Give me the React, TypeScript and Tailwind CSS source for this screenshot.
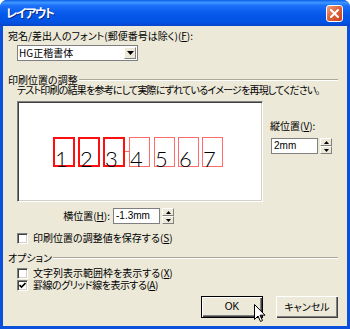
import React from 'react';

const jp = "font-['Noto_Sans_CJK_JP',sans-serif] [font-feature-settings:'palt']";

const Key: React.FC<{ k: string }> = ({ k }) => <span className="underline underline-offset-1">{k}</span>;

const Check: React.FC<{ checked?: boolean }> = ({ checked }) => (
  <span className="flex h-[11px] w-[11px] shrink-0 items-center justify-center border border-t-[#808080] border-l-[#808080] border-b-white border-r-white bg-white shadow-[inset_1px_1px_0_#404040,inset_-1px_-1px_0_#d4d0c8]">
    {checked && (
      <svg width="7" height="7" viewBox="0 0 7 7">
        <path d="M0.5 3 L2.5 5 L6.5 1" fill="none" stroke="#000" strokeWidth="1.6" />
      </svg>
    )}
  </span>
);

const Arrow: React.FC<{ up?: boolean }> = ({ up }) => (
  <svg width="5" height="3" viewBox="0 0 5 3">
    <path d={up ? 'M2.5 0 L5 3 L0 3 Z' : 'M0 0 L5 0 L2.5 3 Z'} fill="#000" />
  </svg>
);

const Spin: React.FC = () => (
  <div className="ml-[2px] flex h-[16px] w-[12px] flex-col">
    <div className="flex h-[8px] items-center justify-center border border-t-white border-l-white border-b-[#808080] border-r-[#808080] bg-[#ece9d8]">
      <Arrow up />
    </div>
    <div className="flex h-[8px] items-center justify-center border border-t-white border-l-white border-b-[#808080] border-r-[#808080] bg-[#ece9d8]">
      <Arrow />
    </div>
  </div>
);

const SpinField: React.FC<{ value: string }> = ({ value }) => (
  <div className="flex items-center">
    <div className="flex h-[16px] w-[47px] items-center border border-[#7f7f7f] bg-white pl-[2px] text-[10px] leading-none font-['Liberation_Sans',sans-serif]">
      {value}
    </div>
    <Spin />
  </div>
);

const GroupHeader: React.FC<{ label: string }> = ({ label }) => (
  <div className="mr-[9px] flex h-[11px] items-center leading-[11px]">
    <span>{label}</span>
    <div className="ml-[1px] h-[2px] flex-1 border-t border-t-[#aca899] border-b border-b-white" />
  </div>
);

type Mark = { n: string; strong?: boolean; ml: number };

const marks: Mark[] = [
  { n: '1', strong: true, ml: 0 },
  { n: '2', strong: true, ml: 3 },
  { n: '3', strong: true, ml: 3 },
  { n: '4', ml: 0 },
  { n: '5', ml: 4 },
  { n: '6', ml: 3 },
  { n: '7', ml: 3 },
];

const Preview: React.FC = () => (
  <div className="h-[101px] w-[246px] border border-t-[#808080] border-l-[#808080] border-b-white border-r-white bg-white shadow-[inset_1px_1px_0_#404040,inset_-1px_-1px_0_#d4d0c8]">
    <div className="flex pl-[35px] pt-[35px]">
      {marks.map((m, i) => (
        <React.Fragment key={m.n}>
          {i === 3 && <div className="mt-[14px] h-px w-[4px] bg-[#ff6a6a]" />}
          <div
            className={
              m.strong
                ? 'relative h-[30px] w-[22px] border-2 border-[#ff1010]'
                : 'relative h-[30px] w-[21px] border border-[#ff6a6a]'
            }
            style={{ marginLeft: m.ml }}
          >
            <span
              className={
                m.strong
                  ? "absolute left-[0px] top-[9px] text-[22px] font-light leading-none text-black font-['Lato',sans-serif]"
                  : "absolute left-[0px] top-[10px] text-[22px] font-light leading-none text-black font-['Lato',sans-serif]"
              }
            >
              {m.n}
            </span>
          </div>
        </React.Fragment>
      ))}
    </div>
  </div>
);

const Cursor: React.FC = () => (
  <svg className="absolute left-[251px] top-[278px]" width="12" height="19" viewBox="0 0 12 19">
    <path d="M0.5 0.5 L0.5 15.5 L4 12 L6.5 17.5 L8.5 16.5 L6 11.2 L11 11.2 Z" fill="#fff" stroke="#000" strokeWidth="1" strokeLinejoin="miter" />
  </svg>
);

const App: React.FC = () => {
  return (
    <div className={`flex h-[329px] w-[350px] flex-col overflow-hidden rounded-t-[7px] bg-[#0a50dc] text-black ${jp}`}>
      {/* title bar */}
      <div className="flex h-[26px] shrink-0 items-center justify-between bg-[linear-gradient(to_bottom,#0a5ee8_0%,#3e96ff_10%,#1a6ff8_22%,#0658ea_55%,#0253e4_85%,#0a44c8_100%)] pl-[6px] pr-[7px]">
        <span className="text-[12px] font-bold leading-none tracking-[-1.4px] text-white [text-shadow:1px_1px_0_#0b2a8a]">レイアウト</span>
        <div className="flex h-[17px] w-[17px] items-center justify-center rounded-[3px] border border-white bg-[linear-gradient(135deg,#f0a080_0%,#e0643c_45%,#c5401c_100%)]">
          <svg width="9" height="9" viewBox="0 0 9 9">
            <path d="M1 1 L8 8 M8 1 L1 8" stroke="#fff" strokeWidth="2" strokeLinecap="square" />
          </svg>
        </div>
      </div>

      {/* body */}
      <div className="relative mx-[3px] mb-[3px] flex flex-1 flex-col bg-[#ece9d8] pl-[5px] pt-[4px] text-[10px] leading-[12px]">
        <div className="h-[12px]">
          宛名/差出人のフォント(郵便番号は除く)(<Key k="F" />):
        </div>
        <div className="ml-[9px] mt-[3px] flex h-[16px] w-[121px] items-center border border-[#7f7f7f] bg-white">
          <span className="flex-1 pl-[1px]">HG正楷書体</span>
          <div className="mr-px flex h-[12px] w-[12px] items-center justify-center border border-t-white border-l-white border-b-[#808080] border-r-[#808080] bg-[#ece9d8]">
            <svg width="7" height="4" viewBox="0 0 7 4">
              <path d="M0 0 L7 0 L3.5 4 Z" fill="#000" />
            </svg>
          </div>
        </div>

        <div className="mt-[13px]">
          <GroupHeader label="印刷位置の調整" />
        </div>
        <div className="ml-[9px] h-[10px] whitespace-nowrap leading-[10px] tracking-[-0.8px]">
          テスト印刷の結果を参考にして実際にずれているイメージを再現してください。
        </div>

        <div className="ml-[9px] mt-[6px] flex">
          <Preview />
          <div className="ml-[7px] flex flex-col pt-[19px]">
            <div className="h-[12px]">
              縦位置(<Key k="V" />):
            </div>
            <div className="ml-px mt-[6px]">
              <SpinField value="2mm" />
            </div>
          </div>
        </div>

        <div className="mt-[6px] flex h-[16px] items-center">
          <div className="w-[102px] text-right">
            横位置(<Key k="H" />):
          </div>
          <div className="ml-[3px]">
            <SpinField value="-1.3mm" />
          </div>
        </div>

        <div className="ml-[9px] mt-[8px] flex h-[12px] items-center gap-[5px]">
          <Check />
          <span>
            印刷位置の調整値を保存する(<Key k="S" />)
          </span>
        </div>

        <div className="mt-[8px]">
          <GroupHeader label="オプション" />
        </div>
        <div className="ml-[9px] mt-[4px] flex h-[12px] items-center gap-[5px]">
          <Check />
          <span>
            文字列表示範囲枠を表示する(<Key k="X" />)
          </span>
        </div>
        <div className="ml-[9px] flex h-[12px] items-center gap-[5px]">
          <Check checked />
          <span className="tracking-[-0.5px]">
            罫線のグリッド線を表示する(<Key k="A" />)
          </span>
        </div>

        <div className="mr-[9px] mt-[5px] flex justify-end gap-[13px]">
          <button className="flex h-[22px] w-[62px] items-center justify-center border border-black bg-[#ece9d8] shadow-[inset_1px_1px_0_#fff,inset_-1px_-1px_0_#404040,inset_-2px_-2px_0_#808080] font-['Liberation_Sans',sans-serif] text-[10px]">
            OK
          </button>
          <button className="flex h-[22px] w-[62px] items-center justify-center bg-[#ece9d8] shadow-[inset_1px_1px_0_#fff,inset_-1px_-1px_0_#404040,inset_-2px_-2px_0_#808080] text-[10px]">
            キャンセル
          </button>
        </div>

        <Cursor />
      </div>
    </div>
  );
};

export default App;
